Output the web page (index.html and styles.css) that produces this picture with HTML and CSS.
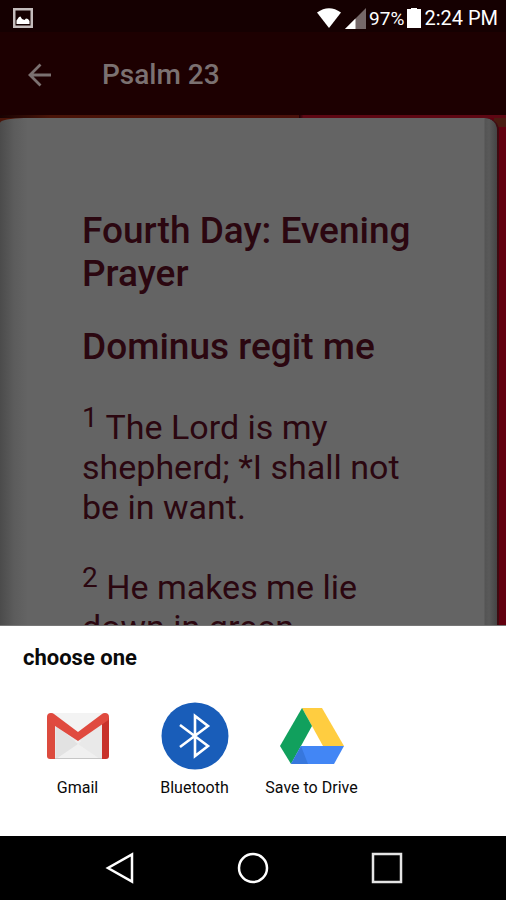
FILE: index.html
```html
<!DOCTYPE html>
<html lang="en">
<head>
<meta charset="utf-8">
<meta name="viewport" content="width=device-width, initial-scale=1">
<title>Psalm 23</title>
<link rel="stylesheet" href="styles.css">
</head>
<body>
<div class="status">
  <svg class="status-photo" width="20" height="20" viewBox="0 0 20 20" aria-hidden="true">
    <rect x="1.25" y="1.25" width="17.5" height="17.5" fill="none" stroke="#c4bcbc" stroke-width="2.5"/>
    <path d="M3.500 16V12.500L6 9L7.500 8.500L9 11L11.500 12L13 10.500L15 11L16.500 13V16Z" fill="#fff"/>
  </svg>
  <svg width="26" height="20" viewBox="0 0 26 20" aria-hidden="true">
    <path d="M1 4.500Q13 -4 25 4.500L13 20Z" fill="#fff"/>
  </svg>
  <svg class="status-signal" width="21" height="21" viewBox="0 0 21 21" aria-hidden="true">
    <path d="M0 21L21 0V21Z" fill="#756869"/>
    <path d="M0 21L10.500 10.500V21Z" fill="#fff"/>
  </svg>
  <span class="status-percent">97%</span>
  <svg width="14" height="20" viewBox="0 0 14 20" aria-hidden="true">
    <path d="M0 1H4V0H10V1H14V20H0Z" fill="#fff"/>
  </svg>
  <span class="status-time">2:24 PM</span>
</div>
<header class="appbar">
  <button class="back" aria-label="Back">
    <svg width="24" height="24" viewBox="0 0 24 24" aria-hidden="true">
      <path d="M23 12H2M12.500 1.500L2 12L12.500 22.500" fill="none" stroke="#7b7171" stroke-width="2.800"/>
    </svg>
  </button>
  <h1 class="title">Psalm 23</h1>
</header>
<main class="reader">
  <article class="page">
    <h2>Fourth Day: Evening Prayer</h2>
    <h2>Dominus regit me</h2>
    <p><sup>1</sup> The Lord is my shepherd; *I shall not be in want.</p>
    <p><sup>2</sup> He makes me lie down in green</p>
  </article>
</main>
<section class="sheet" aria-labelledby="sheet-title">
  <h2 class="sheet-title" id="sheet-title">choose one</h2>
  <div class="targets">
    <button class="target">
      <svg width="68" height="68" viewBox="0 0 68 68" aria-hidden="true">
        <path d="M6 11H62V57H6Z" fill="#e9e9e9"/>
        <path d="M12 57L34 36L56 57Z" fill="#f0f0f0"/>
        <path d="M12 23L34 42L12 57Z" fill="#e2e2e2"/>
        <path d="M34 42L56 23V57Z" fill="#e9e9e9"/>
        <path d="M8 11H60L34 31Z" fill="#f3f3f3"/>
        <path d="M3 15V54Q3 57 6 57H11V19Z" fill="#dc4b3e"/>
        <path d="M65 15V54Q65 57 62 57H58V19Z" fill="#c8322b"/>
        <path d="M3 15Q3 11 7 11Q9 11 10 12L34 30L58 12Q59 11 61 11Q65 11 65 15Q65 18 63 19L34 39L5 20Q3 19 3 15Z" fill="#e04a3f"/>
        <path d="M11 56.500H58" stroke="#c6c6c6"/>
      </svg>
      <span>Gmail</span>
    </button>
    <button class="target">
      <svg width="68" height="68" viewBox="0 0 68 68" aria-hidden="true">
        <circle cx="34" cy="34" r="33.500" fill="#195db9"/>
        <path d="M19 23L47 44L34 54V14L47 24L19 45" fill="none" stroke="#fff" stroke-width="2.600"/>
      </svg>
      <span>Bluetooth</span>
    </button>
    <button class="target">
      <svg width="68" height="68" viewBox="0 0 68 68" aria-hidden="true">
        <path d="M24 6H44L66 44H45Z" fill="#ffcd40"/>
        <path d="M24 6L34 24L13 62L2 44Z" fill="#11a05d"/>
        <path d="M23 44H66L56 62H13Z" fill="#4286f5"/>
        <path d="M23 44L13 62H30Z" fill="#3777dd"/>
      </svg>
      <span>Save to Drive</span>
    </button>
  </div>
</section>
<nav class="navbar" aria-label="System">
  <button aria-label="Back">
    <svg width="32" height="32" viewBox="0 0 32 32" aria-hidden="true"><path d="M29 2.500V29.500L5 16Z" fill="none" stroke="#fff" stroke-width="2.500"/></svg>
  </button>
  <button aria-label="Home">
    <svg width="32" height="32" viewBox="0 0 32 32" aria-hidden="true"><circle cx="16" cy="16" r="14" fill="none" stroke="#fff" stroke-width="2.500"/></svg>
  </button>
  <button aria-label="Recent apps">
    <svg width="32" height="32" viewBox="0 0 32 32" aria-hidden="true"><rect x="2" y="2" width="28" height="28" fill="none" stroke="#e4e4e4" stroke-width="2.500"/></svg>
  </button>
</nav>
</body>
</html>
```
FILE: styles.css
```css
* {
  box-sizing: border-box;
}

body {
  display: flex;
  flex-direction: column;
  height: 100vh;
  margin: 0;
  background: #000;
  font-family: Roboto, "Liberation Sans", sans-serif;
}

button {
  padding: 0;
  border: 0;
  background: none;
  color: inherit;
  font: inherit;
}

svg {
  display: block;
  flex: none;
}

.status {
  display: flex;
  flex: none;
  align-items: center;
  height: 32px;
  padding: 4px 8px 0 13px;
  background: #150001;
  color: #fff;
  font-size: 20px;
}

.status-photo {
  margin-right: auto;
}

.status-signal {
  margin: 0 3px;
}

.status-percent {
  margin-right: 3px;
  font-size: 19px;
}

.status-time {
  margin-left: 3px;
}

.appbar {
  display: flex;
  flex: none;
  align-items: center;
  gap: 50px;
  height: 83px;
  padding: 2px 28px 0;
  background: #1d0001;
}

.title {
  margin: 0;
  color: #7b7171;
  font-size: 28px;
  font-weight: 500;
}

.reader {
  flex: 1;
  min-height: 0;
  padding: 3px 7px 0 0;
  overflow: hidden;
  background:
    linear-gradient(90deg, #180303, #4a1408 10%, #4a100a 59%, #180003 59%, #5e0713 60%, #5e0713) top / 100% 3px no-repeat,
    linear-gradient(90deg, #4a1c12, #4a1c12) top right / 12px 12px no-repeat,
    linear-gradient(90deg, #4a1408, #4a1408) top left / 20px 12px no-repeat,
    #62000f;
}

.page {
  min-height: 100%;
  padding: 91px 70px 0 82px;
  border-right: 2px solid #3e0a10;
  border-radius: 24px 14px 0 0 / 5px 12px 0 0;
  background: linear-gradient(90deg, #4b4b4b, #5c5c5c 14px, #646464 28px, #646464 calc(100% - 13px), #545454 calc(100% - 12px), #595959 calc(100% - 8px), #444 100%);
  color: #2b0710;
}

.page h2 {
  margin: 0 0 30px;
  font-size: 37px;
  font-weight: 500;
  line-height: 43px;
}

.page p {
  margin: 39px 0 40px;
  font-size: 34px;
  font-weight: 400;
  line-height: 40px;
}

.page sup {
  font-size: 28px;
  line-height: 0;
}

.sheet {
  flex: none;
  padding: 20px 19px 38px;
  border-top: 1px solid #777;
  background: #fff;
  color: #0a0a0a;
}

.sheet-title {
  margin: 0 4px 32px;
  font-size: 22px;
  font-weight: 700;
  line-height: 24px;
}

.targets {
  display: flex;
}

.target {
  display: flex;
  flex-direction: column;
  align-items: center;
  gap: 8px;
  width: 117px;
  font-size: 16px;
  line-height: 20px;
}

.navbar {
  display: flex;
  flex: none;
  align-items: center;
  justify-content: center;
  gap: 102px;
  height: 64px;
  background: #000;
}
```
